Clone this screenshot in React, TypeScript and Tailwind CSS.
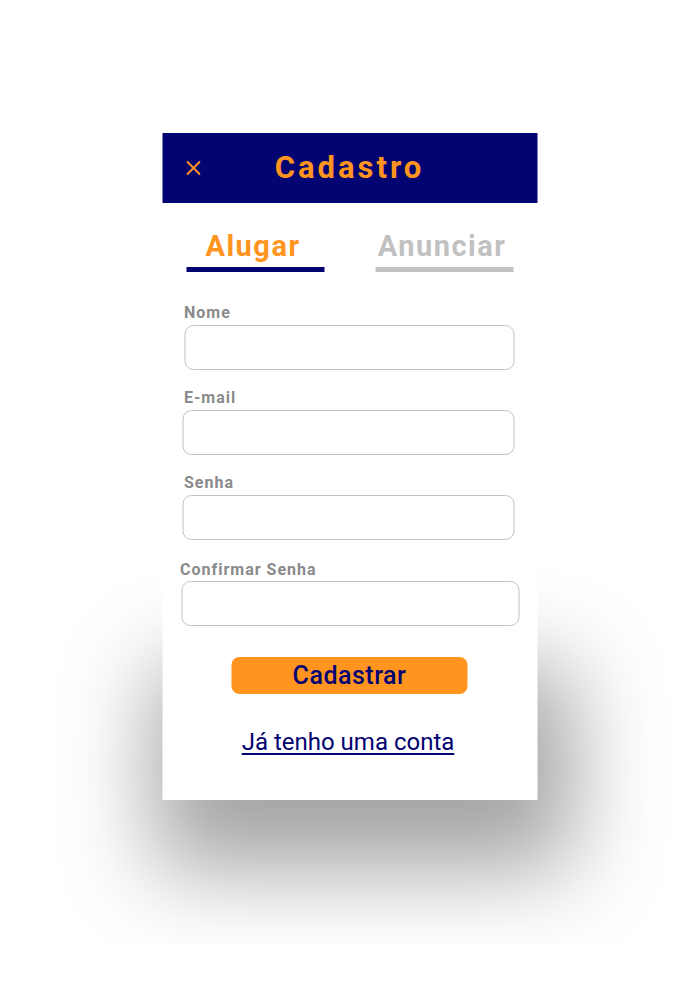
import React from "react";

const NAVY = "text-[#030372]";

type FieldProps = {
  label: string;
  labelClass: string;
  inputClass: string;
  type?: string;
};

const Field = ({ label, labelClass, inputClass, type = "text" }: FieldProps) => {
  return (
    <div className="flex flex-col">
      <label className={`text-[16px] leading-[20px] font-bold tracking-[1px] text-[#8a8a8a] ${labelClass}`}>
        {label}
      </label>
      <input
        type={type}
        className={`h-[45px] rounded-[9px] border border-[#c2c2c2] bg-white px-3 outline-none ${inputClass}`}
      />
    </div>
  );
};

const CloseIcon = () => (
  <svg width="14" height="14" viewBox="0 0 14 14" fill="none">
    <path d="M1 1L13 13M13 1L1 13" stroke="#ff951e" strokeWidth="2" strokeLinecap="round" />
  </svg>
);

export default function App() {
  return (
    <div className="h-[945px] overflow-hidden bg-white pt-[133px] font-['Roboto',sans-serif]">
      <div className="mx-auto w-[375px] -translate-x-[0.5px]">
        <div className="relative bg-white pb-[14px]">
          <header className="grid h-[70px] grid-cols-[1fr_auto_1fr] items-center bg-[#030372]">
            <button className="flex w-fit items-center pl-[24px]">
              <CloseIcon />
            </button>
            <h1 className="text-[31px] font-bold tracking-[3px] text-[#ff951e]">Cadastro</h1>
            <div />
          </header>

          <div className="flex justify-between px-[24px] pt-[26px]">
            <div className="flex w-[138px] flex-col items-center">
              <span className="-ml-[4px] text-[29px] leading-[34px] font-bold tracking-[1.5px] text-[#ff951e]">
                Alugar
              </span>
              <div className="mt-[4px] h-[5px] w-full bg-[#030372]" />
            </div>
            <div className="flex w-[138px] flex-col items-center">
              <span className="-ml-[4px] text-[29px] leading-[34px] font-bold tracking-[1.5px] text-[#c1c1c1]">
                Anunciar
              </span>
              <div className="mt-[4px] h-[5px] w-full bg-[#c1c1c1]" />
            </div>
          </div>

          <form className="mt-[31px] flex flex-col">
            <Field label="Nome" labelClass="ml-[22px] mb-[2px]" inputClass="ml-[22px] w-[330px]" />
            <Field
              label="E-mail"
              type="email"
              labelClass="ml-[22px] mt-[18px] mb-[2px]"
              inputClass="ml-[20px] w-[332px]"
            />
            <Field
              label="Senha"
              type="password"
              labelClass="ml-[22px] mt-[18px] mb-[2px]"
              inputClass="ml-[20px] w-[332px]"
            />
            <Field
              label="Confirmar Senha"
              type="password"
              labelClass="ml-[18px] mt-[20px] mb-[1px]"
              inputClass="ml-[19px] w-[338px]"
            />
          </form>
        </div>

        <div className="flex h-[160px] flex-col items-center bg-white pt-[17px] shadow-[13px_48px_90px_22px_rgba(0,0,0,0.36)]">
          <button className={`h-[37px] w-[236px] rounded-[8px] bg-[#ff951e] text-[25px] leading-[37px] font-medium tracking-[0.5px] ${NAVY}`}>
            Cadastrar
          </button>
          <a
            href="#"
            className={`mt-[34px] -ml-[3px] text-[24px] leading-[28px] underline decoration-2 underline-offset-[3px] ${NAVY}`}
          >
            Já tenho uma conta
          </a>
        </div>
      </div>
    </div>
  );
}
